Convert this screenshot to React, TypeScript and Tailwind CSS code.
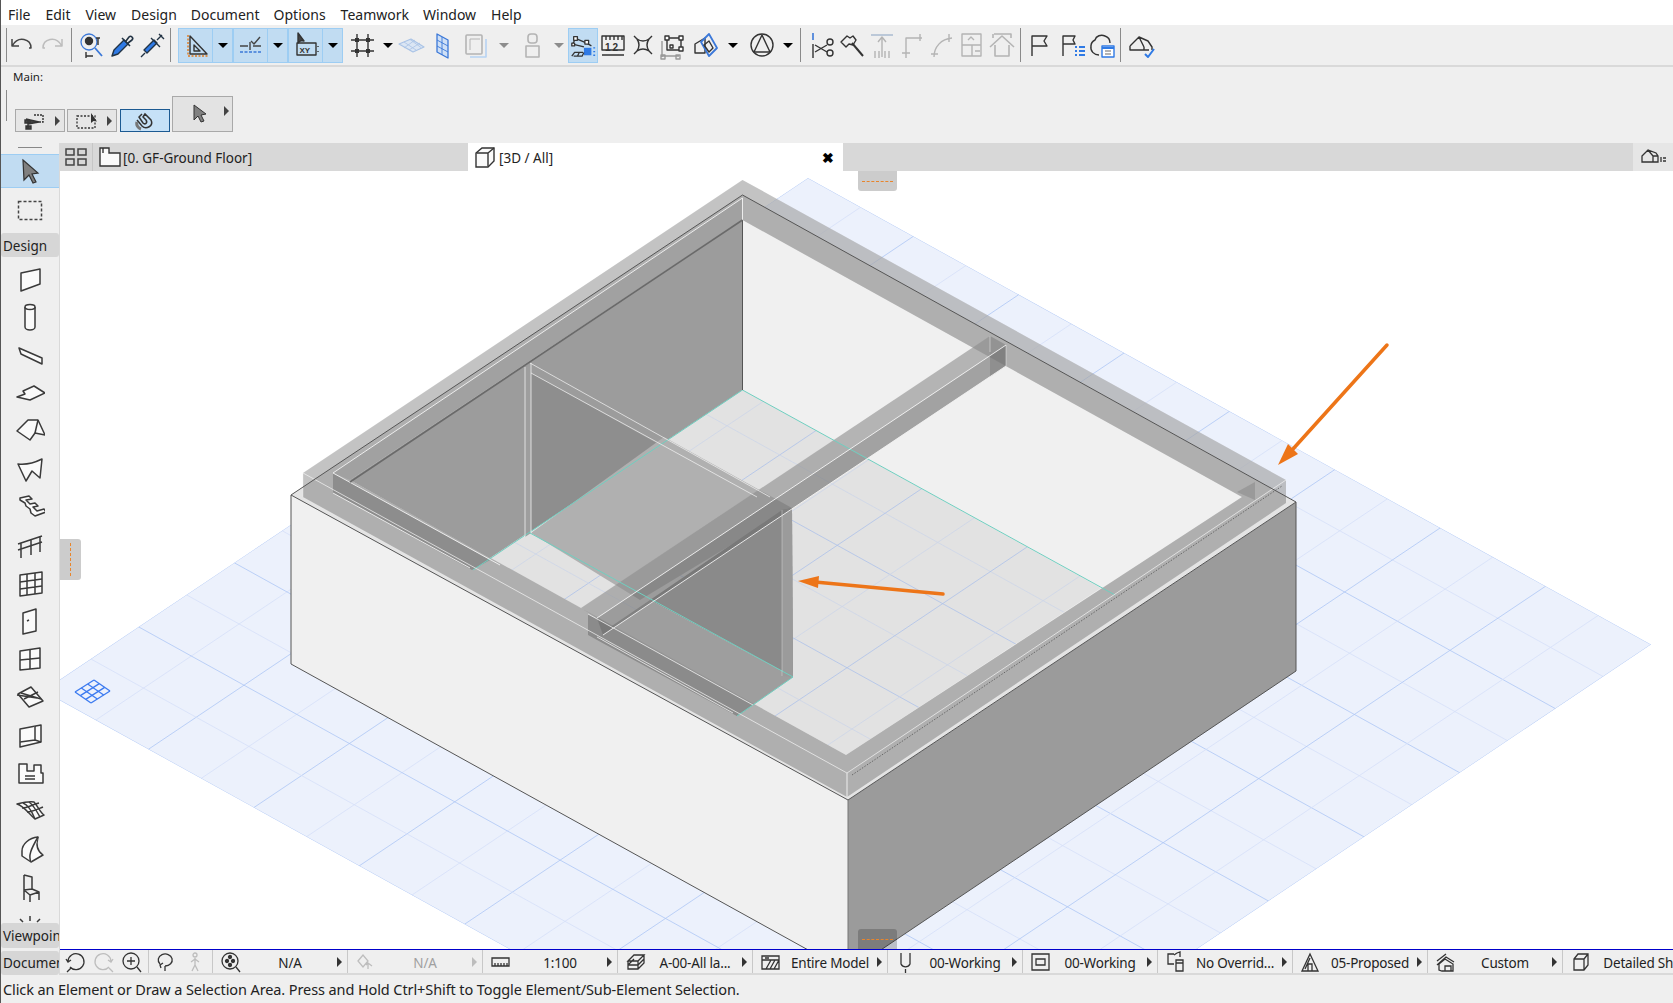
import type { ReactNode } from "react"

const FONT = "[font-family:'Noto_Sans',sans-serif]"

// 30x30 icon box, drawn roughly 1:1 with the screenshot
function Ico({ children, c = "#333", w = 1.4, s = 30 }: { children: ReactNode; c?: string; w?: number; s?: number }) {
  return (
    <svg width={s} height={s} viewBox="0 0 30 30" fill="none" stroke={c} strokeWidth={w} strokeLinejoin="round" className="shrink-0">
      {children}
    </svg>
  )
}

function Sep({ className }: { className: string }) {
  return <div className={`w-px h-[34px] bg-[#8a8a8a] shrink-0 ${className}`} />
}

function Drop({ className = "", gray = false }: { className?: string; gray?: boolean }) {
  return (
    <div className={`flex items-center justify-center shrink-0 ${className}`}>
      <div className={`w-0 h-0 border-x-[5px] border-t-[5px] border-x-transparent ${gray ? "border-t-[#8c8c8c]" : "border-t-black"}`} />
    </div>
  )
}

function SplitBtn({ children }: { children: ReactNode }) {
  return (
    <div className="flex h-[35px] w-[55px] shrink-0 bg-[#c1dcf2] border border-[#9dcdf3]">
      <div className="w-[34px] flex items-center justify-center border-r border-[#9dcdf3]">{children}</div>
      <Drop className="flex-1" />
    </div>
  )
}

const menuItems = [
  ["File", "ml-[7px]"],
  ["Edit", "ml-[15px]"],
  ["View", "ml-[15px]"],
  ["Design", "ml-[15px]"],
  ["Document", "ml-[14px]"],
  ["Options", "ml-[14px]"],
  ["Teamwork", "ml-[15px]"],
  ["Window", "ml-[14px]"],
  ["Help", "ml-[15px]"],
]

function TopToolbar() {
  const g = "#b4b4b4"
  return (
    <div className="h-[42px] bg-[#efefef] border-b-2 border-[#d9d9d9] flex items-center shrink-0">
      <Sep className="ml-[5px] h-[22px]" />
      <Ico w={1.5} c="#444">
        <path d="M5 9v7h7M5.500 15.500C8 11 12 8.500 17 9.500c4 .8 7 4 7 8.500h-2" />
      </Ico>
      <Ico w={1.5} c="#bdbdbd">
        <path d="M25 9v7h-7M24.500 15.500C22 11 18 8.500 13 9.500c-4 .8-7 4-7 8.500h2" />
      </Ico>
      <Sep className="ml-[4px]" />
      <div className="ml-[5px]">
        <Ico>
          <circle cx="12" cy="12" r="8" stroke="#3b78d8" strokeWidth="1.300" />
          <circle cx="12" cy="11" r="3.500" fill="#333" />
          <path d="M18 18l7 8" stroke="#3b78d8" strokeWidth="1.800" />
          <path d="M21 8v7M19 8h4M9 22v6M9 26h7" />
        </Ico>
      </div>
      <Ico>
        <path d="M5 26l2-6 10-10 4 4-10 10z" fill="#2f7ae5" stroke="#234" />
        <path d="M15 8l8 8M19 11l3-4c2-2 5 1 3 3l-4 3" stroke="#234" strokeWidth="1.600" />
      </Ico>
      <Ico>
        <path d="M4 27l4-4M7 20l3 3 10-10-3-3z" fill="#2f7ae5" stroke="#234" />
        <path d="M14 8l9 9M20 10l5-5M22 4l5 5" stroke="#234" />
      </Ico>
      <Sep className="ml-[3px]" />
      <div className="ml-[7px] flex">
        <SplitBtn>
          <Ico>
            <path d="M7 5v21h21" stroke="#e07a1e" strokeWidth="1.400" strokeDasharray="2 1.500" />
            <path d="M9 6l17 18H9z" />
            <path d="M13 15l6 6h-6z" />
          </Ico>
        </SplitBtn>
        <SplitBtn>
          <Ico>
            <path d="M4 16h8M17 16h8M14 12v8" stroke="#444" />
            <path d="M15 11l3 3 6-7" stroke="#444" />
            <path d="M4 22h21" stroke="#3b78d8" strokeDasharray="3 1.500" />
          </Ico>
        </SplitBtn>
        <SplitBtn>
          <Ico>
            <path d="M7 3v10l3-2.500 3 .5z" fill="#444" />
            <rect x="6" y="13" width="19" height="12" />
            <text x="8.500" y="23" fontSize="8" fontWeight="700" fill="#333" stroke="none" fontFamily="Liberation Sans">XY</text>
            <path d="M27 16v1M27 21v1" />
          </Ico>
        </SplitBtn>
      </div>
      <div className="ml-[4px]">
        <Ico>
          <path d="M10 4v23M21 4v23M4 10h23M4 21h23" />
          <path d="M8 8h4v4H8zM19 8h4v4h-4zM8 19h4v4H8zM19 19h4v4h-4z" fill="#333" stroke="none" />
        </Ico>
      </div>
      <Drop className="w-[20px] ml-[1px]" />
      <div className="w-[26px] flex justify-center">
        <Ico c="#a9c3e6" w={1.200}>
          <path d="M3 14l12-5 13 8-11 5z" fill="#dbe6f4" />
          <path d="M8 12l12 8M14 9.500l11 8M8 18l11-8M13 20l11-7" strokeWidth="0.800" />
        </Ico>
      </div>
      <div className="ml-[4px]">
        <Ico c="#3b78d8" w={1.300}>
          <path d="M9 4l11 6v18l-11-6z" fill="#cfe0f6" />
          <path d="M9 10l11 6M9 16l11 6M14 7v18" strokeWidth="0.900" />
        </Ico>
      </div>
      <div className="ml-[3px]">
        <Ico c="#b4b4b4" w={1.600}>
          <rect x="5" y="5" width="16" height="19" rx="1" />
          <path d="M9 27h16V9" stroke="#b7d3f3" />
          <path d="M9 20V9h10" strokeWidth="1" />
        </Ico>
      </div>
      <Drop gray className="w-[20px] ml-[3px]" />
      <div className="ml-[3px]">
        <Ico c={g} w={1.600}>
          <rect x="11" y="4" width="9" height="9" rx="3" />
          <path d="M9 16h13v11H9z" />
        </Ico>
      </div>
      <Drop gray className="w-[18px] ml-[3px]" />
      <div className="w-[30px] h-[35px] bg-[#c1dcf2] border border-[#9dcdf3] flex items-center justify-center shrink-0">
        <Ico s={28}>
          <path d="M7 8l12 5 5 3M7 8l-3 6 12 3" />
          <path d="M5 6h4v4H5zM17 10h4v4h-4zM3 13h3v3H3z" fill="#fff" />
          <rect x="16" y="18" width="8" height="8" fill="#2f7ae5" stroke="none" />
          <path d="M3 27l3-4h9M5 27h9l2-4M9 27l2-4" />
          <path d="M26 18h2M26 22h2M26 26h2" stroke="#2f7ae5" />
        </Ico>
      </div>
      <Ico>
        <path d="M4 6h22v14H4zM4 25h22" />
        <path d="M8 6v4M12 6v4M16 6v4M20 6v4M24 6v4" />
        <text x="7" y="21" fontSize="10" fontWeight="700" fill="#333" stroke="none" fontFamily="Liberation Sans" letterSpacing="2">12</text>
      </Ico>
      <Ico>
        <path d="M6 6l4 4M24 6l-4 4M6 24l4-4M24 24l-4-4M9 9q6 4 12 0q-4 6 0 12q-6-4-12 0q4-6 0-12z" />
      </Ico>
      <Ico>
        <path d="M9 8h14v12H9z" />
        <path d="M7 6h4v4H7zM21 6h4v4h-4zM21 17h4v4h-4zM12 15h3v3h-3z" fill="#fff" />
        <path d="M4 11v16M4 26h17M3 25h4v4H3zM18 25h4v4h-4z" stroke="#999" />
      </Ico>
      <div className="ml-[3px]">
        <Ico>
          <path d="M4 14l10-6v15H4z" />
          <path d="M10 12l8-8 8 14-8 8z" stroke="#3b78d8" strokeWidth="1.800" />
          <path d="M13 15l5-4 4 7-4 4z" />
        </Ico>
      </div>
      <Drop className="w-[18px] ml-[3px]" />
      <div className="ml-[5px]">
        <Ico>
          <circle cx="15" cy="15" r="11" />
          <path d="M15 5L7 22h16z" />
        </Ico>
      </div>
      <Drop className="w-[18px] ml-[2px]" />
      <Sep className="ml-[3px]" />
      <div className="ml-[6px]">
        <Ico>
          <path d="M6 3v7" stroke="#3b78d8" strokeWidth="1.600" />
          <path d="M6 14v14M8 15l12 7M8 22l12-7" />
          <circle cx="23" cy="12" r="3" />
          <circle cx="23" cy="23" r="3" />
        </Ico>
      </div>
      <Ico>
        <path d="M4 12l6-6 3 2 3-2 3 4-3 5-4-1-3 3z" />
        <path d="M15 13l11 13" strokeWidth="2" />
      </Ico>
      <Ico c={g}>
        <path d="M4 5h22" stroke="#aebed2" strokeWidth="1.600" />
        <path d="M15 7v20M11 12l4-5 4 5M8 21v7M12 21v7M18 21v7M22 21v7" />
      </Ico>
      <Ico c={g}>
        <path d="M9 28V8h16M23 4v7M5 23h8" />
      </Ico>
      <Ico c={g}>
        <path d="M7 27C7 17 14 9 25 8M22 4v8M4 24h7" />
      </Ico>
      <Ico c={g}>
        <path d="M5 4h19v22H5zM5 15h19M15 15v11M11 10l3-3 3 3M18 21h5" />
      </Ico>
      <Ico c={g} w={1.600}>
        <path d="M7 4h17v4M6 4v4M3 17L15 6l12 11M8 15v11h14V15" />
      </Ico>
      <Sep className="ml-[3px]" />
      <div className="ml-[4px]">
        <Ico>
          <path d="M7 26V6h15l-3 5 3 5H7" />
        </Ico>
      </div>
      <div className="ml-[2px]">
        <Ico>
          <path d="M6 26V6h12l-2 4 2 4H6" />
          <path d="M18 16h2v2h-2zM22 16h6v2h-6zM18 20h2v2h-2zM22 20h6v2h-6zM18 24h2v2h-2zM22 24h6v2h-6z" fill="#2f7ae5" stroke="none" />
        </Ico>
      </div>
      <Ico>
        <path d="M12 25c-5 0-9-4-8-9 0-3 2-5 4-6 1-4 6-6 10-4 3 1 5 4 5 7" />
        <rect x="15" y="16" width="12" height="11" fill="#fff" stroke="#2f7ae5" />
        <path d="M15 18h12" stroke="#2f7ae5" strokeWidth="2" />
        <path d="M18 21h6M18 24h6" stroke="#9a9a9a" />
      </Ico>
      <Sep className="ml-[3px]" />
      <div className="ml-[6px]">
        <Ico>
          <path d="M3 16L12 7l9 4 4 6v3M3 16v4h19M12 7l5 10M17 17v3" />
          <path d="M18 24l3 3 6-8" stroke="#2f7ae5" strokeWidth="2" />
        </Ico>
      </div>
    </div>
  )
}

function InfoBox() {
  return (
    <div className="h-[76px] bg-[#efefef] relative shrink-0 flex flex-col">
      <div className="text-[11.500px] text-[#222] pl-[12px] pt-[2px] leading-[16px]">Main:</div>
      <div className="flex items-end flex-1 pb-[11px]">
        <div className="w-px h-[31px] bg-[#8a8a8a] ml-[5px] mb-[11px]" />
        <div className="flex ml-[8px] items-end">
          <div className="w-[50px] h-[23px] bg-[#e6e6e6] border border-[#a9a9a9] flex items-center pl-[8px]">
            <svg width="20" height="18" viewBox="0 0 20 18" fill="none" stroke="#333" strokeWidth="1.400">
              <path d="M10 3h9v7h-9" strokeDasharray="2 1" />
              <path d="M2 7l13 3-11 2M4 8v9M1 8h5v3H1zM2 14h5v3H2z" fill="#444" />
            </svg>
            <div className="ml-auto mr-[4px] w-0 h-0 border-y-[5px] border-l-[5px] border-y-transparent border-l-[#444]" />
          </div>
          <div className="w-[50px] h-[23px] ml-[2px] bg-[#e6e6e6] border border-[#a9a9a9] flex items-center pl-[8px]">
            <svg width="22" height="18" viewBox="0 0 22 18" fill="none" stroke="#333" strokeWidth="1.300">
              <path d="M1 4h18v12H1z" strokeDasharray="2 1.500" />
              <path d="M15 1v10l2.500-2 3.500.5z" fill="#333" stroke="none" />
            </svg>
            <div className="ml-auto mr-[4px] w-0 h-0 border-y-[5px] border-l-[5px] border-y-transparent border-l-[#444]" />
          </div>
          <div className="w-[50px] h-[23px] ml-[3px] bg-[#c6e1f7] border border-[#1c5a92] flex items-center justify-center">
            <svg width="20" height="20" viewBox="0 0 20 20" fill="none" stroke="#333" strokeWidth="1.500">
              <path d="M7 3l-3 3 4 6c2 2 5 0 3-3L8 6l2-3 6 6c3 6-5 10-9 6L2 9" />
              <path d="M2 11c-1 3 1 6 4 7" stroke="#777" strokeWidth="3" />
            </svg>
          </div>
          <div className="w-[61px] h-[36px] ml-[2px] bg-[#e3e3e3] border border-[#a9a9a9] flex items-center pl-[18px]">
            <svg width="20" height="22" viewBox="0 0 20 22">
              <path d="M3 2l12 9-5 1 3 6-3 1-3-6-4 4z" fill="#808080" stroke="#333" strokeWidth="1" />
            </svg>
            <div className="ml-auto mr-[3px] mb-[6px] w-0 h-0 border-y-[5px] border-l-[5px] border-y-transparent border-l-[#444]" />
          </div>
        </div>
      </div>
    </div>
  )
}

const toolIcons: ReactNode[] = [
  <path key="wall" d="M6 9l19-4v15L6 27z" fill="#fafafa" />,
  <g key="col" fill="#fafafa">
    <path d="M10 5a5 2.500 0 0 1 10 0v20a5 3 0 0 1-10 0z" />
    <path d="M10 5a5 2.500 0 0 0 10 0" />
  </g>,
  <path key="beam" d="M4 8l23 10v6L6 14z" fill="#fafafa" />,
  <path key="slab" d="M2 19l8-3-2-3 11-5 11 7-15 7z" fill="#fafafa" />,
  <g key="roof" fill="#fafafa">
    <path d="M2 15L13 4h10l7 15-10-2-5 7z" />
    <path d="M23 4l-3 13" />
  </g>,
  <path key="shell" d="M3 10c8 1 16-1 24-5l-2 19-8-7-6 10z" fill="#fafafa" />,
  <path key="stair" d="M5 6l9-2 3 3-6 1 4 4 5-1 3 3-5 1 4 4 7-2 2 3-11 4-4-3-1-4-4-3-1-3-5-3z" fill="#fafafa" />,
  <path key="rail" d="M3 14L27 6M3 20l24-8M6 13v15M16 10v15M25 7v15" />,
  <g key="cw" fill="#fafafa">
    <path d="M5 7l22-3v21L5 28z" />
    <path d="M5 14l22-3M5 21l22-3M12 6v21M20 5v21" />
  </g>,
  <g key="door" fill="#fafafa">
    <path d="M8 7l13-4v22L8 28z" />
    <path d="M12 15l2-1" />
  </g>,
  <g key="win" fill="#fafafa">
    <path d="M5 7l20-3v20L5 26z" />
    <path d="M15 5v20M5 16l20-2" />
  </g>,
  <g key="sky" fill="#fafafa">
    <path d="M3 12l13-7 12 14-14 6z" />
    <path d="M9 17L23 10M6 11l20 6M2 13l20 3" />
  </g>,
  <g key="corner" fill="#fafafa">
    <path d="M5 9l21-4v17L5 27z" />
    <path d="M5 22l15-2V6M20 20l6 2" />
  </g>,
  <g key="zone" fill="#fafafa">
    <path d="M4 6h8v7h7V7h7v8h2v10H4z" />
    <path d="M10 18h10M10 21h10" />
  </g>,
  <g key="mesh">
    <path d="M2 8c8-2 12-3 17-2 3 3 6 10 10 13l-9 4C13 17 9 10 2 8z" fill="#fafafa" />
    <path d="M8 7c3 1 8 6 12 16M14 6c3 2 6 6 11 15M7 12c6 0 9-3 17-5M12 16c5 0 11-3 16-5" />
  </g>,
  <g key="morph" fill="#fafafa">
    <path d="M7 17C7 10 14 4 23 3c-2 7-1 14 5 18l-12 7-9-6z" />
    <path d="M16 28c-3-6 0-13 7-25" />
  </g>,
  <path key="chair" d="M9 3l8 2v12M9 3v15M9 18l8-1 7 3-9 3zM9 18v10M24 20v8M15 23v7" />,
  <g key="lamp">
    <path d="M8 22a7 7 0 0 1 14 0v3H8z" fill="#fafafa" />
    <path d="M15 6v5M5 9l3 3M25 9l-3 3M1 17h4M29 17h-4" />
    <path d="M12 20h1M17 20h1" />
  </g>,
]

function LeftPanel() {
  return (
    <div className="w-[59px] bg-[#efefef] border-r border-[#d9d9d9] flex flex-col shrink-0">
      <div className="h-[11px] flex justify-center pt-[4px] shrink-0">
        <div className="w-[24px] h-px bg-[#888]" />
      </div>
      <div className="h-[34px] bg-[#c1dcf2] border-y border-[#9dcdf3] flex items-center justify-center shrink-0">
        <svg width="24" height="28" viewBox="0 0 24 28">
          <path d="M5 3l15 13-6 1 4 8-3 1-4-8-5 5z" fill="#808080" stroke="#333" strokeWidth="1.200" />
        </svg>
      </div>
      <div className="h-[45px] flex items-center justify-center shrink-0">
        <svg width="26" height="21" viewBox="0 0 26 21" fill="none" stroke="#444" strokeWidth="1.500">
          <rect x="1.500" y="1.500" width="23" height="18" strokeDasharray="3 2" />
        </svg>
      </div>
      <div className={`h-[24px] bg-[#d6d6d6] rounded-[3px] text-[13.500px] text-[#222] pl-[2px] pt-[1px] leading-[24px] shrink-0 ${FONT}`}>Design</div>
      <div className="flex-1 min-h-0 overflow-hidden pt-[3px]">
        {toolIcons.map((icon, i) => (
          <div key={i} className="h-[38px] flex items-center justify-center">
            <Ico w={1.500} c="#3a3a3a">{icon}</Ico>
          </div>
        ))}
      </div>
      <div className={`h-[25px] bg-[#d6d6d6] rounded-[3px] text-[13.500px] text-[#222] pl-[2px] pt-[1px] leading-[25px] overflow-hidden whitespace-nowrap shrink-0 ${FONT}`}>Viewpoints</div>
      <div className="h-[3px] shrink-0" />
      <div className={`h-[24px] bg-[#d6d6d6] rounded-[3px] text-[13.500px] text-[#222] pl-[2px] leading-[24px] overflow-hidden whitespace-nowrap shrink-0 ${FONT}`}>Document</div>
    </div>
  )
}

function TabStrip() {
  return (
    <div className="h-[28px] bg-[#d8d8d8] flex shrink-0 text-[13.500px] text-[#222]">
      <div className="w-[33px] border-r border-[#c6c6c6] flex items-center justify-center">
        <svg width="24" height="20" viewBox="0 0 24 20" fill="none" stroke="#444" strokeWidth="1.500">
          <rect x="2" y="2" width="8" height="6" />
          <rect x="14" y="2" width="8" height="6" />
          <rect x="2" y="12" width="8" height="6" />
          <rect x="14" y="12" width="8" height="6" />
        </svg>
      </div>
      <div className="w-[375px] flex items-center pl-[5px]">
        <svg width="24" height="22" viewBox="0 0 24 22" fill="#fafafa" stroke="#333" strokeWidth="1.400">
          <path d="M2 2h9v5h11v13H2z" />
          <path d="M5 2v5" />
        </svg>
        <span className="ml-[1px] pt-[2px]">[0. GF-Ground Floor]</span>
      </div>
      <div className="w-[375px] bg-white flex items-center pl-[5px]">
        <svg width="24" height="24" viewBox="0 0 24 24" fill="#fafafa" stroke="#333" strokeWidth="1.400">
          <path d="M3 8l6-5h12v13l-6 6H3z" />
          <path d="M3 8h12v14M15 8l6-5" />
        </svg>
        <span className="ml-[2px] pt-[2px]">[3D / All]</span>
        <span className="ml-auto mr-[9px] font-bold text-black text-[14px]">✖</span>
      </div>
      <div className="flex-1" />
      <div className="w-[40px] bg-[#e6e6e6] flex items-center justify-center">
        <svg width="26" height="20" viewBox="0 0 26 20" fill="none" stroke="#333" strokeWidth="1.300">
          <path d="M2 9l6-6 8 3 2 3v6H2zM13 9h5M13 9v6M8 3l5 6" />
          <path d="M21 10v5M23 11h3M23 14h3" />
        </svg>
      </div>
    </div>
  )
}

// the model view: every point is a page pixel, the viewBox matches the canvas box
const TOP = [808, 178]
const U = [843, 466.5]
const V = [-765, 513]

function gridLines(major: string, minor: string) {
  const out: ReactNode[] = []
  for (let i = 0; i <= 16; i++) {
    const t = i / 16
    const col = i % 2 === 0 ? major : minor
    out.push(
      <line key={`u${i}`} x1={TOP[0] + U[0] * t} y1={TOP[1] + U[1] * t} x2={TOP[0] + U[0] * t + V[0]} y2={TOP[1] + U[1] * t + V[1]} stroke={col} strokeWidth="0.800" />,
      <line key={`v${i}`} x1={TOP[0] + V[0] * t} y1={TOP[1] + V[1] * t} x2={TOP[0] + V[0] * t + U[0]} y2={TOP[1] + V[1] * t + U[1]} stroke={col} strokeWidth="0.800" />,
    )
  }
  return out
}

function originMark() {
  const a = [75, 692]
  const b = [19, -12]
  const c = [16, 11]
  const out: ReactNode[] = []
  for (let i = 0; i <= 3; i++) {
    const t = i / 3
    out.push(
      <line key={`a${i}`} x1={a[0] + b[0] * t} y1={a[1] + b[1] * t} x2={a[0] + b[0] * t + c[0]} y2={a[1] + b[1] * t + c[1]} />,
      <line key={`b${i}`} x1={a[0] + c[0] * t} y1={a[1] + c[1] * t} x2={a[0] + c[0] * t + b[0]} y2={a[1] + c[1] * t + b[1]} />,
    )
  }
  return <g stroke="#3b7af0" strokeWidth="1.300">{out}</g>
}

function ModelView() {
  const white = "#f4f4f4"
  return (
    <svg viewBox="60 171 1613 778" className="absolute inset-0 w-full h-full">
      <defs>
        <clipPath id="plane">
          <polygon points="808,178 1651,644.500 886,1157.500 43,691" />
        </clipPath>
        <clipPath id="floor">
          <polygon points="742.500,390 1101,588 846,755 490,558" />
        </clipPath>
      </defs>
      <polygon points="808,178 1651,644.500 886,1157.500 43,691" fill="#ecf1fc" />
      <g clipPath="url(#plane)">{gridLines("#adc6f5", "#d5e0f9")}</g>
      {originMark()}

      {/* base block */}
      <polygon points="291,495 848,800 848,972 291,664" fill="#f0f0f0" />
      <polygon points="848,800 1296,502 1296,671 848,972" fill="#9b9b9b" />
      <polygon points="291,495 742.500,195 1296,502 848,800" fill="#e4e4e4" />

      {/* inside of the room */}
      <polygon points="742.500,220 1242,497 846,755 350,480" fill="#f0f0f0" />
      <polygon points="742.500,390 1101,588 846,755 490,558" fill="#e2e2e2" />
      <g clipPath="url(#floor)">{gridLines("#adc2ea", "#cdd6e8")}</g>
      <polygon points="350,480 742.500,220 742.500,390 490,558" fill="#9c9c9c" />
      <polygon points="525,367 531,363 531,533 525,537" fill="#9e9e9e" />
      <polygon points="531,373 660,445 531,531" fill="#8e8e8e" />
      <polygon points="531,533 664,437 792,508 640,600" fill="#b0b0b0" />

      {/* cross wall at the front */}
      <polygon points="597,636 650,600 793,677 737,716" fill="#9e9e9e" />
      <polygon points="650,600 782,510 792,508 793,677" fill="#8a8a8a" />
      <polygon points="782,510 792,508 793,677 782,676" fill="#9b9b9b" />
      <polygon points="588,614 753,705 737,716 597,640 588,635" fill="#8a8a8a" />

      {/* translucent wall ring */}
      <path d="M303,473 L742.500,180 L1286,480 L1286,503 L847,797 L303,497 Z M350,480 L846,755 L1242,497 L742.500,220 Z" fillRule="evenodd" fill="#8c8c8c" fillOpacity="0.6" />
      <polygon points="303,473 742.500,180 1286,480 1286,497 742.500,195 291,495 303,487" fill="#ffffff" fillOpacity="0.14" />
      <polygon points="742.500,198 333,473 350,480 742.500,220" fill="#808080" fillOpacity="0.3" />
      <polygon points="333,473 333,493 472,570 490,560 350,482" fill="#8d8d8d" />
      <polygon points="1255,482 1255,500 1237,492" fill="#9a9a9a" />
      <polygon points="990,336 1006,345 1006,366 990,377" fill="#909090" fillOpacity="0.5" />

      {/* beam across the room */}
      <polygon points="990,336 1006,345 597,618 581,608" fill="#8c8c8c" fillOpacity="0.6" />
      <polygon points="1006,345 1006,366 603,635 597,618" fill="#6e6e6e" fillOpacity="0.6" />

      {/* edges */}
      <g fill="none" stroke="#6fcfc0" strokeWidth="1">
        <path d="M742.500,390 L1115,595" />
        <path d="M742.500,390 L473,570" />
        <path d="M530,533 L793,677 L737,716" />
      </g>
      <g fill="none" stroke={white} strokeWidth="0.900">
        <path d="M303,473 L847,773 L1286,480" strokeOpacity="0.8" />
        <path d="M847,773 V797" />
        <path d="M303,473 V497" strokeOpacity="0.4" />
        <path d="M333,473 L742.500,198 V220" />
        <path d="M333,473 L500,565 M333,493 L470,568" />
        <path d="M525,367 V537 M531,363 V533" strokeOpacity="0.85" />
        <path d="M530,363 L770,497 M531,373 L757,497" strokeOpacity="0.8" />
        <path d="M1006,345 L597,618 M1006,366 L603,635" />
        <path d="M990,336 V352 M1006,345 V366" strokeOpacity="0.5" />
        <path d="M588,614 L753,705 M597,637 L733,713" strokeOpacity="0.85" />
        <path d="M782,510 V676" strokeOpacity="0.4" />
      </g>
      <path d="M852,775 L1282,486" stroke="#555" strokeWidth="0.800" strokeDasharray="1.500 1.500" fill="none" />
      <g fill="none" stroke="#555" strokeWidth="1">
        <path d="M291,495 L742.500,195 L1296,502" />
        <path d="M291,664 V495 L848,800 L1296,502 V671 L848,972 L291,664" />
        <path d="M848,800 V972" stroke="#777" />
        <path d="M742.500,220 V390" />
      </g>
      <path d="M350,482 L742.500,220" stroke="#6a6a6a" strokeWidth="1.600" fill="none" />

      {/* annotation arrows */}
      <g fill="#ed7518">
        <path d="M1387,345 L1293,449" stroke="#ed7518" strokeWidth="3.500" strokeLinecap="round" />
        <polygon points="1278,465 1298,454 1288,444" />
        <path d="M943,594 L815,582" stroke="#ed7518" strokeWidth="3.500" strokeLinecap="round" />
        <polygon points="798,581 819,576 818,588" />
      </g>
    </svg>
  )
}

function Canvas() {
  return (
    <div className="flex-1 min-h-0 relative bg-white overflow-hidden border-b border-[#0000cc]">
      <ModelView />
      <div className="absolute top-0 left-[798px] w-[39px] h-[20px] bg-black/20 rounded-b-[3px] flex items-center justify-center">
        <div className="w-[31px] border-t border-dashed border-[#e8852c]" />
      </div>
      <div className="absolute bottom-0 left-[798px] w-[39px] h-[20px] bg-black/20 rounded-t-[3px] flex items-center justify-center">
        <div className="w-[31px] border-t border-dashed border-[#e8852c]" />
      </div>
      <div className="absolute top-[368px] left-0 w-[21px] h-[41px] bg-black/20 rounded-r-[3px] flex items-center justify-center">
        <div className="h-[33px] border-l border-dashed border-[#e8852c]" />
      </div>
    </div>
  )
}

function StatusIco({ children, gray }: { children: ReactNode; gray?: boolean }) {
  return (
    <svg width="22" height="22" viewBox="0 0 22 22" fill="none" stroke={gray ? "#bdbdbd" : "#333"} strokeWidth="1.300" className="shrink-0">
      {children}
    </svg>
  )
}

const statusItems: { label: string; gray?: boolean; icon: ReactNode }[] = [
  {
    label: "N/A",
    icon: (
      <g>
        <circle cx="10" cy="10" r="8" />
        <path d="M16 16l4 5" />
        <circle cx="7" cy="10" r="1.500" fill="#333" />
        <circle cx="13" cy="10" r="1.500" fill="#333" />
        <circle cx="10" cy="6" r="1.500" fill="#333" />
        <circle cx="10" cy="14" r="1.500" fill="#333" />
      </g>
    ),
  },
  {
    label: "N/A",
    gray: true,
    icon: <path d="M3 10l5-6 5 6-5 6zM13 18v-6l4 3M13 12l-2 2" />,
  },
  {
    label: "1:100",
    icon: <path d="M2 7h17v8H2zM5 15v-3M8 15v-3M11 15v-3M14 15v-3M17 15v-3" />,
  },
  {
    label: "A-00-All la...",
    icon: <path d="M3 10l6-6h10l-6 6zM3 14l6-6M3 10v8h10l6-6V4M3 14h10l6-6M13 10v8" />,
  },
  {
    label: "Entire Model",
    icon: <path d="M2 5h17v13H2zM2 9h17M6 18l5-9M10 18l5-9M14 18l5-9M5 7h4" />,
  },
  {
    label: "00-Working",
    icon: <path d="M6 2v11a5 5 0 0 0 9 0V2M10.500 18v4" />,
  },
  {
    label: "00-Working",
    icon: <path d="M2 3h17v16H2zM6 8h9v6H6z" />,
  },
  {
    label: "No Overrid...",
    icon: <path d="M9 3H3v10h6M12 2l3-1v5M9 4l3-2M11 9h7v11h-7zM11 12h7" />,
  },
  {
    label: "05-Proposed",
    icon: <path d="M2 20L10 3l8 17zM8 20v-7h4v7M5 18l5-11" />,
  },
  {
    label: "Custom",
    icon: <path d="M2 10l9-7M2 14l9-8 8 5M4 19v-6l6-5 8 5v7H7zM10 20v-5h6v5" />,
  },
  {
    label: "Detailed Sh.",
    icon: <path d="M4 8l4-5h10v11l-4 5H4zM4 8h10v11M14 8l4-5" />,
  },
]

function StatusBar() {
  return (
    <div className={`h-[25px] bg-[#efefef] border-b-2 border-[#d9d9d9] flex text-[13.500px] tracking-[-0.2px] text-[#222] shrink-0 ${FONT}`}>
      <div className="w-[89px] flex items-center justify-between px-[5px] border-r border-[#c8c8c8] shrink-0">
        <StatusIco><path d="M3 10a8 8 0 1 1 2 6M1 8l2 3 3-2M6 17l-4 4" /></StatusIco>
        <StatusIco gray><path d="M18 10a8 8 0 1 0-2 6M20 8l-2 3-3-2M16 17l4 4" /></StatusIco>
        <StatusIco><circle cx="10" cy="10" r="8" /><path d="M6 10h8M10 6v8M16 16l4 5" /></StatusIco>
      </div>
      <div className="w-[64px] flex items-center justify-around px-[3px] border-r border-[#c8c8c8] shrink-0">
        <StatusIco><path d="M5 13a7 6 0 1 1 5 2M8 12l-3 2 1 3M10 15v5" /></StatusIco>
        <StatusIco gray><circle cx="11" cy="4" r="2" /><path d="M11 7v7M7 11l4-3 4 3M8 20l3-6 3 6" /></StatusIco>
      </div>
      {statusItems.map((item, i) => (
        <div key={i} className="w-[135px] flex items-center pl-[7px] border-r border-[#c8c8c8] shrink-0 whitespace-nowrap overflow-hidden">
          <StatusIco gray={item.gray}>{item.icon}</StatusIco>
          <div className={`flex-1 flex justify-center pl-[7px] pt-[3px] ${item.gray ? "text-[#a0a0a0]" : ""}`}>{item.label}</div>
          <div className="w-[16px] flex justify-center shrink-0">
            <div className={`w-0 h-0 border-y-[5px] border-l-[5px] border-y-transparent ${item.gray ? "border-l-[#bdbdbd]" : "border-l-[#333]"}`} />
          </div>
        </div>
      ))}
    </div>
  )
}

export default function App() {
  return (
    <div className={`w-[1673px] h-[1003px] bg-white border-l border-[#555] flex flex-col overflow-hidden ${FONT}`}>
      <div className="h-[25px] flex items-center text-[14px] text-[#222] shrink-0 pt-[4px]">
        {menuItems.map(([name, cls]) => (
          <span key={name} className={cls}>{name}</span>
        ))}
      </div>
      <TopToolbar />
      <InfoBox />
      <div className="flex-1 min-h-0 flex">
        <LeftPanel />
        <div className="flex-1 min-w-0 flex flex-col">
          <TabStrip />
          <Canvas />
          <StatusBar />
        </div>
      </div>
      <div className="h-[28px] bg-[#efefef] text-[14.500px] tracking-[-0.1px] text-[#222] pl-[2px] leading-[28px] shrink-0">
        Click an Element or Draw a Selection Area. Press and Hold Ctrl+Shift to Toggle Element/Sub-Element Selection.
      </div>
    </div>
  )
}
